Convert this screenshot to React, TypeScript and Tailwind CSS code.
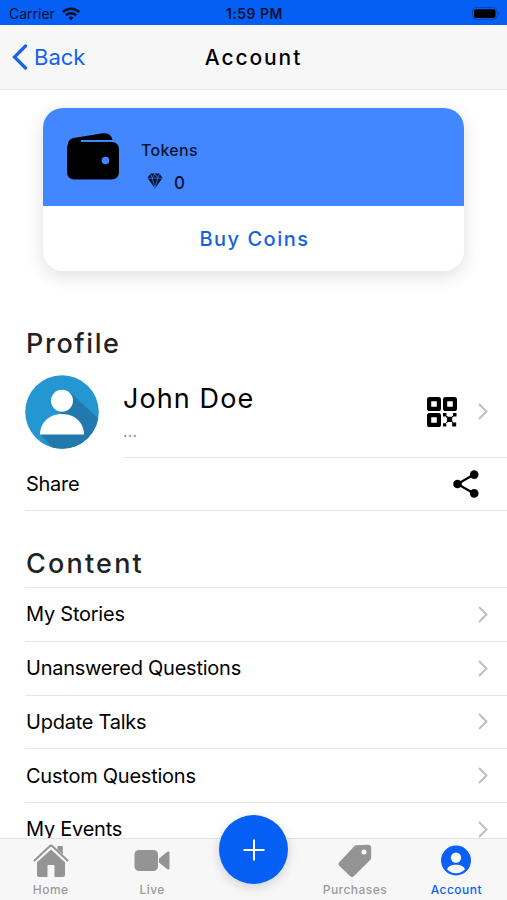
import React from 'react';
import clsx from 'clsx';

const contentItems = ['My Stories', 'Unanswered Questions', 'Update Talks', 'Custom Questions', 'My Events'];

function WifiIcon() {
  return (
    <svg width="18" height="14" viewBox="0 0 18 14" fill="none" stroke="#05102e" strokeWidth="2.600">
      <path d="M.8 5C5.400.6 12.600.6 17.200 5" />
      <path d="M3.900 8.300c2.900-2.700 7.300-2.700 10.200 0" />
      <path d="M6.300 10.600c1.600-1.400 3.800-1.400 5.400 0L9 13.400z" fill="#05102e" stroke="none" />
    </svg>
  );
}

function BatteryIcon() {
  return (
    <svg width="28" height="13" viewBox="0 0 28 13">
      <rect x="0.500" y="0.500" width="24.500" height="12" rx="3.500" fill="none" stroke="#0646b8" />
      <rect x="2" y="2.200" width="21.500" height="8.800" rx="2" fill="#000" />
      <path d="M26.300 4.500v4c1.300-.8 1.300-3.200 0-4z" fill="#0646b8" />
    </svg>
  );
}

function WalletIcon() {
  return (
    <svg width="52" height="47" viewBox="0 0 52 47">
      <path d="M1 11C1.500 7 4 5.300 8 4.700L36 .3c5-.8 9 2.200 9.500 6.700H14v2h31c4 0 7 3 7 7v23c0 4.500-3 7.500-7.500 7.500h-37C3 46.500 0 43.500 0 39V16c0-2 .3-3.500 1-5z" />
      <circle cx="38.500" cy="27.500" r="3.800" fill="#4287ff" />
    </svg>
  );
}

function GemIcon() {
  return (
    <svg width="16" height="16" viewBox="0 0 16 16">
      <path d="M3.500.5h9L15.500 5 8 15.500.5 5z" fill="#06132f" />
      <path d="M.5 5.200h15M3.500.8 5.200 5 8 15 10.800 5l1.700-4.200M5.200 5 8 .8 10.800 5" fill="none" stroke="#4287ff" strokeWidth="0.700" />
    </svg>
  );
}

function AvatarIcon() {
  return (
    <svg width="74" height="74" viewBox="0 0 74 74">
      <defs>
        <clipPath id="avatar">
          <circle cx="37" cy="37" r="36.800" />
        </clipPath>
      </defs>
      <g clipPath="url(#avatar)">
        <path d="M0 0h74v74H0z" fill="#2497d3" />
        <path d="M46 18 78 48v30H32L15 59l20-20z" fill="#2179ad" />
      </g>
      <circle cx="37" cy="25.700" r="11" fill="#fff" />
      <path d="M15 59.500C15 47.500 24.500 39 37 39s22 8.500 22 20.500z" fill="#fff" />
    </svg>
  );
}

function QrIcon() {
  return (
    <svg width="30" height="30" viewBox="0 0 30 30">
      <g fill="none" stroke="#000" strokeWidth="4.200">
        <rect x="2.100" y="2.100" width="9.800" height="9.800" rx="0.500" />
        <rect x="18.100" y="2.100" width="9.800" height="9.800" rx="0.500" />
        <rect x="2.100" y="18.100" width="9.800" height="9.800" rx="0.500" />
      </g>
      <path d="M16 16h3.500v3.500H16zM26 16h3.500v3.500H26zM20 19.800h5.200V25H20zM16 26.200h3.300v3.300H16zM25.200 25.500h4v4h-4zM19 19h1.500v1.500H19zM25 19h1.200v1.200H25zM19.200 24.800h1.200V26h-1.200zM25 24.800h1V26h-1z" />
    </svg>
  );
}

function ShareIcon() {
  return (
    <svg width="26" height="28" viewBox="0 0 26 28">
      <path d="M21 4.500 4.500 14 21 23.500" fill="none" stroke="#000" strokeWidth="2.200" />
      <circle cx="4.500" cy="14" r="4.300" />
      <circle cx="21.200" cy="4.600" r="4.300" />
      <circle cx="21.200" cy="23.400" r="4.300" />
    </svg>
  );
}

function Chevron() {
  return (
    <svg width="10" height="17" viewBox="0 0 10 17" fill="none" stroke="#bdbdbf" strokeWidth="1.900">
      <path d="m1 1 7.500 7.500L1 16" />
    </svg>
  );
}

function HomeIcon() {
  return (
    <svg width="36" height="34" viewBox="0 0 36 34" fill="#949494">
      <path d="M1.500 16.500 16.700 2.200a2 2 0 0 1 2.700 0L34.500 16.500" fill="none" stroke="#949494" strokeWidth="2" strokeLinecap="round" />
      <path d="M24.500 2h5.300v8.300l-5.300-4.800z" />
      <path d="M18 5.500 32 18.300V31a2 2 0 0 1-2 2h-8.500V22a1 1 0 0 0-1-1h-5a1 1 0 0 0-1 1v11H6a2 2 0 0 1-2-2V18.300z" />
    </svg>
  );
}

function VideoIcon() {
  return (
    <svg width="36" height="34" viewBox="0 0 36 34" fill="#949494">
      <rect x="0.500" y="6" width="23.500" height="21" rx="4.500" />
      <path d="M25 14.500 33 8c1.200-1 2.500-.5 2.500.8v15.400c0 1.300-1.300 1.800-2.500.8l-8-6.500z" />
    </svg>
  );
}

function TagIcon() {
  return (
    <svg width="34" height="34" viewBox="0 0 34 34" fill="#949494">
      <path fillRule="evenodd" d="M18.500 1.200 30 .8c2 0 3.200 1 3.200 3v9.700c0 1-.4 1.800-1 2.500L16 32c-1.300 1.300-2.700 1.300-4 0L1.500 22c-1.300-1.300-1.300-2.700 0-4L16.300 2.200c.6-.6 1.300-1 2.200-1zM26 5.400a2.500 2.500 0 1 0 0 5 2.500 2.500 0 0 0 0-5z" />
    </svg>
  );
}

function AccountIcon() {
  return (
    <svg width="30" height="32" viewBox="0 0 30 32">
      <circle cx="15" cy="15.500" r="15" fill="#0a60f5" />
      <circle cx="15" cy="12.600" r="5.200" fill="#f7f7f7" />
      <path d="M6 24.300c1-3.200 5-4.500 9-4.500s8 1.300 9 4.500c-2.400 2.600-5.500 4-9 4s-6.600-1.400-9-4z" fill="#f7f7f7" />
    </svg>
  );
}

interface TabProps {
  label: string;
  icon: React.ReactNode;
  active?: boolean;
}

function Tab({ label, icon, active }: TabProps) {
  return (
    <button className="flex flex-1 flex-col items-center pt-1">
      <span className="flex h-[36px] items-center">{icon}</span>
      <span
        className={clsx(
          'mt-[3px] text-[12px] leading-[16px] font-medium tracking-[0.450px]',
          active ? 'text-[#0a60f5]' : 'text-[#9b9b9b]'
        )}
      >
        {label}
      </span>
    </button>
  );
}

export default function App() {
  return (
    <div className="flex h-[900px] w-[507px] flex-col overflow-hidden bg-white font-['Inter',sans-serif] text-black">
      {/* Status bar */}
      <div className="grid h-[25px] shrink-0 grid-cols-3 items-center bg-[#055ff5] pt-[2px] pr-[7px] pl-[9px] text-[#05102e]">
        <div className="flex items-center gap-[7px]">
          <span className="text-[14px]">Carrier</span>
          <WifiIcon />
        </div>
        <span className="text-center text-[14px] font-semibold tracking-[0.500px]">1:59 PM</span>
        <div className="flex justify-end">
          <BatteryIcon />
        </div>
      </div>

      {/* Header */}
      <header className="grid h-[65px] shrink-0 grid-cols-3 items-center border-b border-[#e9e9e9] bg-[#f7f7f7] px-3">
        <button className="flex items-center gap-[6px] text-[#1463ef]">
          <svg width="16" height="26" viewBox="0 0 16 26" fill="none" stroke="currentColor" strokeWidth="3.200" strokeLinecap="round">
            <path d="M13.500 2 2.500 13l11 11" />
          </svg>
          <span className="text-[22px]">Back</span>
        </button>
        <h1 className="pt-px text-center text-[21px] font-medium tracking-[1.900px]">Account</h1>
      </header>

      <main className="min-h-0 flex-1 overflow-hidden">
        {/* Tokens card */}
        <section className="mx-[43px] mt-[18px] h-[163px] overflow-hidden rounded-[20px] bg-white shadow-[0_5px_18px_rgba(0,0,0,0.13)]">
          <div className="flex h-[98px] gap-[22px] bg-[#4287ff] pl-6">
            <div className="mt-[25px]">
              <WalletIcon />
            </div>
            <div className="pt-[31px] text-[#06132f]">
              <div className="text-[16px] leading-[22px] font-medium tracking-[0.300px]">Tokens</div>
              <div className="mt-[11px] flex items-center gap-[11px] pl-[6px] text-[17px] leading-[22px] font-medium">
                <div className="-mt-[5px]">
                  <GemIcon />
                </div>
                <span>0</span>
              </div>
            </div>
          </div>
          <button className="block h-[65px] w-full pl-[2px] text-[20px] font-medium tracking-[1.500px] text-[#1463e0]">Buy Coins</button>
        </section>

        {/* Profile */}
        <h2 className="mt-[55px] ml-[26px] text-[27px] leading-[36px] font-medium tracking-[1.600px] text-[#222]">Profile</h2>
        <div className="flex h-[95.500px] pl-[25px]">
          <div className="mt-[13px]">
            <AvatarIcon />
          </div>
          <div className="ml-6 flex flex-1 items-center justify-between border-b border-[#e6e6e6] pr-[19px]">
            <div className="pt-[8px]">
              <div className="text-[27px] leading-[34px] tracking-[1.100px]">John Doe</div>
              <div className="mt-[4px] text-[15px] leading-[24px] font-medium tracking-[0.200px] text-[#999]">...</div>
            </div>
            <div className="flex items-center gap-[21px] pt-[5px]">
              <QrIcon />
              <Chevron />
            </div>
          </div>
        </div>
        <div className="ml-[25px] flex h-[53.500px] items-center justify-between border-b border-[#e6e6e6] pr-[28px]">
          <span className="pl-px text-[20px] tracking-[-0.300px]">Share</span>
          <ShareIcon />
        </div>

        {/* Content */}
        <h2 className="mt-[35px] ml-[26px] text-[27px] leading-[36px] font-medium tracking-[2.200px] text-[#222]">Content</h2>
        <ul className="mt-[5px] ml-[25px] border-t border-[#e6e6e6]">
          {contentItems.map((item) => (
            <li key={item} className="flex h-[53.750px] items-center justify-between border-b border-[#e6e6e6] pr-[19px]">
              <span className="pl-px text-[20px] tracking-[-0.240px]">{item}</span>
              <Chevron />
            </li>
          ))}
        </ul>
      </main>

      {/* Tab bar */}
      <nav className="relative flex h-[62px] shrink-0 border-t border-[#e4e4e4] bg-[#f7f7f7]">
        <Tab label="Home" icon={<HomeIcon />} />
        <Tab label="Live" icon={<VideoIcon />} />
        <div className="flex-1" />
        <Tab label="Purchases" icon={<TagIcon />} />
        <Tab label="Account" icon={<AccountIcon />} active />
        <button className="absolute -top-[24px] left-[219px] flex h-[69px] w-[69px] items-center justify-center rounded-full bg-[#055ff5] shadow-[0_3px_12px_rgba(0,0,0,0.16)]">
          <svg width="22" height="22" viewBox="0 0 22 22" stroke="#fff" strokeWidth="2">
            <path d="M11 .5v21M.5 11h21" />
          </svg>
        </button>
      </nav>
    </div>
  );
}
